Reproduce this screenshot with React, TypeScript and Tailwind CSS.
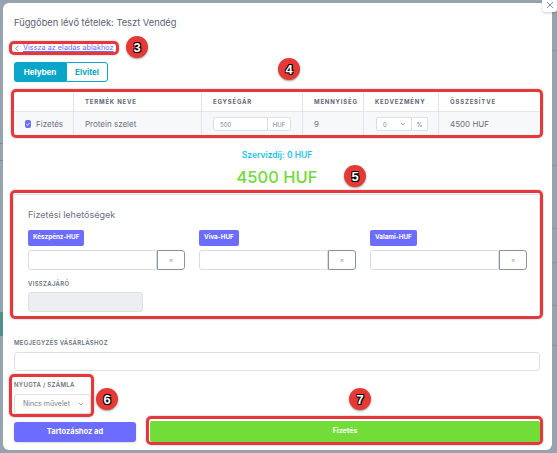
import React from "react";

const RED = "border-[#e5383b]";

function Badge({ n, x, y }: { n: string; x: number; y: number }) {
  return (
    <div
      className="absolute w-[22px] h-[22px] rounded-full bg-[#e53935] flex items-center justify-center text-white font-bold text-[13px] leading-none shadow-[0_1px_2px_rgba(0,0,0,0.4)]"
      style={{ left: x - 11, top: y - 11, fontFamily: '"Liberation Sans", Arial, sans-serif', textShadow: "1px 1px 0 #000, -1px -1px 0 #000, 1px -1px 0 #000, -1px 1px 0 #000" }}
    >
      {n}
    </div>
  );
}

function Box({ x, y, w, h }: { x: number; y: number; w: number; h: number }) {
  return (
    <div
      className={`absolute border-[3px] ${RED} rounded-[5px] shadow-[0_0_2px_rgba(0,0,0,0.35)]`}
      style={{ left: x, top: y, width: w, height: h }}
    />
  );
}

function PayCol({ label }: { label: string }) {
  return (
    <div className="flex flex-col w-[157px]">
      <div className="self-start h-[16px] px-[5px] rounded-[2px] bg-[#6c6cff] text-white text-[6.3px] font-bold flex items-center">
        {label}
      </div>
      <div className="flex mt-[4px] h-[20px]">
        <div className="w-[129px] border border-[#d9dce1] rounded-l-[3px] bg-white" />
        <div className="flex-1 border border-[#8a93a3] rounded-r-[3px] flex items-center justify-center text-[7px] text-[#9aa1ad]">
          ×
        </div>
      </div>
    </div>
  );
}

export default function App() {
  const th = "px-[11px] flex items-center text-[6px] font-bold tracking-[0.8px] text-[#5f6677] border-r border-[#e3e5e9]";
  const td = "px-[11px] flex items-center text-[8px] text-[#6b7180] border-r border-[#e3e5e9]";
  return (
    <div
      className="relative w-[557px] h-[453px] bg-[#97a3af] overflow-hidden"
      style={{ fontFamily: 'Inter, "Noto Sans", sans-serif' }}
    >
      {/* faint backdrop details */}
      <div className="absolute left-[552px] top-[50px] w-[5px] h-px bg-[#8995a1]" />
      <div className="absolute left-[552px] top-[165px] w-[5px] h-px bg-[#8995a1]" />
      <div className="absolute left-[552px] top-[228px] w-[5px] h-px bg-[#8995a1]" />
      <div className="absolute left-[552px] top-[262px] w-[5px] h-px bg-[#8995a1]" />
      <div className="absolute left-[552px] top-[305px] w-[5px] h-px bg-[#8995a1]" />
      <div className="absolute left-[552px] top-[345px] w-[5px] h-px bg-[#8995a1]" />
      <div className="absolute left-0 top-[143px] w-[3px] h-px bg-[#7b86b8]" />
      <div className="absolute left-0 top-[160px] w-[3px] h-px bg-[#7b86b8]" />
      <div className="absolute left-0 top-[312px] w-[3px] h-[24px] bg-[#4f8f8c]" />

      {/* modal */}
      <div className="absolute left-[3px] top-[3px] w-[549px] h-[447px] bg-white rounded-[6px] pl-[11px] pr-[12px] pt-[12px] flex flex-col">
        <div className="text-[9.3px] leading-[16px] text-[#5b6172]">Függőben lévő tételek: Teszt Vendég</div>

        <div className="mt-[11px] h-[12px] flex items-center gap-[3px] text-[7.3px] text-[#7367f0] underline">
          <svg width="6" height="7" viewBox="0 0 6 8" fill="none" stroke="#7367f0" strokeWidth="1">
            <path d="M4.5 1 L1.5 4 L4.5 7" />
          </svg>
          <span>Vissza az eladás ablakhoz</span>
        </div>

        <div className="mt-[8px] flex h-[20px] w-[94px]">
          <div className="w-[52px] bg-[#0aa6c9] rounded-l-[3px] text-white text-[8px] font-bold flex items-center justify-center">
            Helyben
          </div>
          <div className="flex-1 border border-[#0aa6c9] rounded-r-[3px] text-[#0aa6c9] text-[8px] font-bold flex items-center justify-center">
            Elvitel
          </div>
        </div>

        {/* table */}
        <div className="mt-[9px] border-t border-[#e3e5e9]">
          <div className="grid grid-cols-[60px_128px_101px_61px_75px_1fr] h-[20px] border-b border-[#e3e5e9]">
            <div className={th}></div>
            <div className={th}>TERMÉK NEVE</div>
            <div className={th}>EGYSÉGÁR</div>
            <div className={th}>MENNYISÉG</div>
            <div className={th}>KEDVEZMÉNY</div>
            <div className={th + " border-r-0"}>ÖSSZESÍTVE</div>
          </div>
          <div className="grid grid-cols-[60px_128px_101px_61px_75px_1fr] h-[24px] bg-[#f7f8fa]">
            <div className={td + " gap-[5px]"}>
              <div className="w-[8px] h-[8px] rounded-[2px] bg-[#6c6cff] flex items-center justify-center">
                <svg width="6" height="6" viewBox="0 0 8 8" fill="none" stroke="white" strokeWidth="1.2">
                  <path d="M1.8 4.2 L3.3 5.6 L6.2 2.6" />
                </svg>
              </div>
              <span>Fizetés</span>
            </div>
            <div className={td}>Protein szelet</div>
            <div className={td}>
              <div className="flex h-[14px]">
                <div className="w-[55px] bg-white border border-[#dcdfe4] rounded-l-[2px] text-[6px] text-[#7b8190] pl-[6px] flex items-center">500</div>
                <div className="w-[23px] bg-white border border-l-0 border-[#dcdfe4] rounded-r-[2px] text-[6px] text-[#7b8190] flex items-center justify-center">HUF</div>
              </div>
            </div>
            <div className={td}>9</div>
            <div className={td + " pl-[12px]"}>
              <div className="flex h-[14px]">
                <div className="w-[36px] bg-white border border-[#dcdfe4] rounded-l-[2px] text-[6px] text-[#7b8190] pl-[6px] pr-[5px] flex items-center justify-between">
                  <span>0</span>
                  <svg width="6" height="4" viewBox="0 0 6 4" fill="none" stroke="#8a909c" strokeWidth="0.8">
                    <path d="M0.8 0.8 L3 3 L5.2 0.8" />
                  </svg>
                </div>
                <div className="w-[16px] bg-white border border-l-0 border-[#dcdfe4] rounded-r-[2px] text-[6px] text-[#7b8190] flex items-center justify-center">%</div>
              </div>
            </div>
            <div className={td + " border-r-0"}>4500 HUF</div>
          </div>
        </div>

        <div className="mt-[13px] text-center text-[8.5px] leading-[12px] font-semibold text-[#1ec3ea]">Szervizdíj: 0 HUF</div>
        <div className="mt-[5px] text-center text-[16.5px] leading-[22px] font-medium text-[#72d93b]">4500 HUF</div>

        {/* payment card */}
        <div className="mt-[6px] ml-[-1px] h-[124px] border border-[#dfe2e6] rounded-[3px] pl-[14px] pt-[13px] flex flex-col">
          <div className="text-[9px] leading-[14px] text-[#6b7180]">Fizetési lehetőségek</div>
          <div className="mt-[8px] flex gap-[14px]">
            <PayCol label="Készpénz-HUF" />
            <PayCol label="Viva-HUF" />
            <PayCol label="Valami-HUF" />
          </div>
          <div className="mt-[9px] text-[6px] leading-[10px] font-semibold tracking-[0.3px] text-[#6b7180]">VISSZAJÁRÓ</div>
          <div className="mt-[3px] w-[115px] h-[20px] bg-[#eceef1] border border-[#dcdfe4] rounded-[3px]" />
        </div>

        <div className="mt-[20px] text-[6px] leading-[10px] font-semibold tracking-[0.3px] text-[#6b7180]">MEGJEGYZÉS VÁSÁRLÁSHOZ</div>
        <div className="mt-[4px] h-[19px] border border-[#dcdfe4] rounded-[3px]" />

        <div className="mt-[9px] text-[6px] leading-[10px] font-semibold tracking-[0.3px] text-[#6b7180]">NYUGTA / SZÁMLA</div>
        <div className="mt-[4px] w-[77px] h-[20px] border border-[#dcdfe4] rounded-[3px] pl-[8px] pr-[6px] flex items-center justify-between text-[7px] text-[#7b8190]">
          <span>Nincs művelet</span>
          <svg width="6" height="4" viewBox="0 0 6 4" fill="none" stroke="#8a909c" strokeWidth="0.8">
            <path d="M0.8 0.8 L3 3 L5.2 0.8" />
          </svg>
        </div>

        <div className="mt-[7px] flex items-center gap-[14px]">
          <div className="w-[122px] h-[20px] bg-[#6c6cff] rounded-[3px] text-white text-[7.5px] font-bold flex items-center justify-center shadow-[0_1px_2px_rgba(0,0,0,0.15)]">
            Tartozáshoz ad
          </div>
          <div className="flex-1 h-[21px] bg-[#72dd38] rounded-[2px] text-white text-[7px] font-bold flex items-center justify-center">
            Fizetés
          </div>
        </div>
      </div>

      {/* close button */}
      <div className="absolute left-[542px] top-[-2px] w-[15px] h-[14px] bg-white rounded-[3px] shadow-[0_1px_3px_rgba(0,0,0,0.2)] flex items-center justify-center">
        <svg width="8" height="8" viewBox="0 0 8 8" stroke="#7c8494" strokeWidth="0.9">
          <path d="M1 1 L7 7 M7 1 L1 7" />
        </svg>
      </div>

      {/* annotations */}
      <Box x={9} y={41} w={110} h={14} />
      <Box x={11} y={89} w={532} h={49} />
      <Box x={10} y={190} w={533} h={129} />
      <Box x={9} y={374} w={85} h={43} />
      <Box x={146} y={416} w={397} h={29} />
      <Badge n="3" x={137} y={47} />
      <Badge n="4" x={289} y={69} />
      <Badge n="5" x={355} y={176} />
      <Badge n="6" x={107} y={399} />
      <Badge n="7" x={360} y={399} />
    </div>
  );
}
